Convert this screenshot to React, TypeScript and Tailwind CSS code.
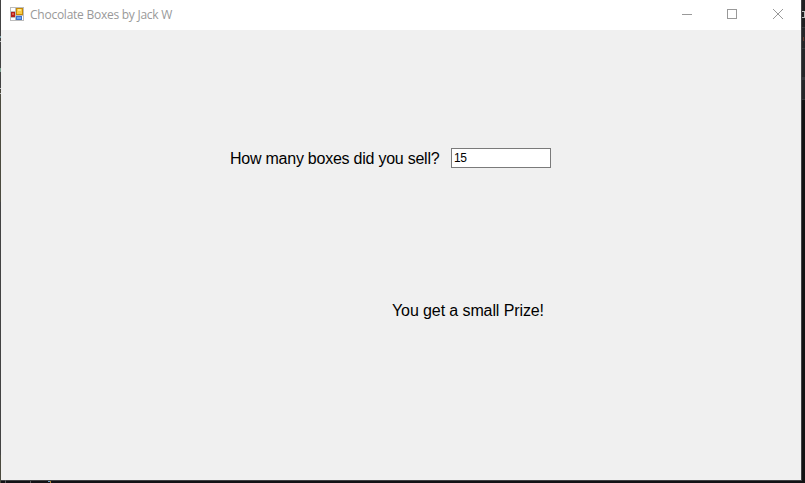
function FormIcon() {
  return (
    <svg width="14" height="14" viewBox="0 0 14 14" shapeRendering="crispEdges" className="shrink-0">
      <rect width="14" height="14" fill="#bcbcbc" />
      <rect x="1" y="1" width="4" height="3" fill="#fff" />
      <rect x="1" y="11" width="4" height="2" fill="#fff" />
      <rect x="12" y="9" width="1" height="4" fill="#fff" />
      <rect x="1" y="5" width="4" height="5" fill="#b3201c" />
      <rect x="2" y="6" width="2" height="2" fill="#e05a48" />
      <rect x="6" y="1" width="7" height="7" fill="#c58a08" />
      <rect x="7" y="2" width="5" height="5" fill="#f8cb45" />
      <rect x="8" y="2" width="3" height="2" fill="#ffe58c" />
      <rect x="6" y="9" width="6" height="4" fill="#3b72cf" />
      <rect x="7" y="10" width="4" height="2" fill="#70a5f0" />
    </svg>
  );
}

function TitleBar() {
  return (
    <header className="flex h-[30px] items-start justify-between bg-white">
      <div className="flex items-start pl-[9px] pt-[7px]">
        <FormIcon />
        <span className="ml-[6px] whitespace-nowrap font-['Open_Sans',sans-serif] text-[12px] leading-[16px] tracking-[-0.25px] text-[#999]">
          Chocolate Boxes by Jack W
        </span>
      </div>
      <div className="flex pr-[17px] pt-[9px]">
        <svg width="102" height="11" viewBox="0 0 102 11" fill="none" stroke="#999">
          <path d="M0 5.5h10M45.5 .5h9v9h-9z" shapeRendering="crispEdges" />
          <path d="M91 0l10 10M101 0L91 10" />
        </svg>
      </div>
    </header>
  );
}

function DesktopEdge() {
  return (
    <svg width="4" height="483" viewBox="0 0 4 483" shapeRendering="crispEdges" className="shrink-0">
      <rect width="4" height="483" fill="#131314" />
      <rect width="4" height="27" fill="#1f2022" />
      <rect y="27" width="4" height="73" fill="#252629" />
      <path d="M0 27.5h4M0 48.5h4M0 99.5h4" stroke="#38393c" />
      <rect y="77" width="4" height="3" fill="#36373b" />
      <path d="M0 11.5h2.5v6H0" fill="none" stroke="#bbb" />
      <rect x="1" y="37" width="1" height="4" fill="#693c31" />
    </svg>
  );
}

export default function App() {
  return (
    <div className="flex h-[483px] w-[805px] overflow-hidden bg-[#111113]">
      <svg width="1" height="483" viewBox="0 0 1 483" shapeRendering="crispEdges" className="shrink-0">
        <rect width="1" height="483" fill="#424242" />
        <rect y="90" width="1" height="112" fill="#4b4a3e" />
        <rect y="455" width="1" height="28" fill="#4b4a3e" />
        <rect y="36" width="1" height="2" fill="#799da4" />
        <rect y="41" width="1" height="1" fill="#bbb" />
        <rect y="68" width="1" height="4" fill="#799d8c" />
        <rect y="88" width="1" height="1" fill="#bbb" />
        <rect y="93" width="1" height="1" fill="#bbb" />
      </svg>
      <div className="flex w-[800px] shrink-0 flex-col">
        <TitleBar />
        <main className="h-[450px] bg-[#f0f0f0] font-['Liberation_Sans',Arial,sans-serif] text-[16px] leading-[20px] text-black">
          <div className="flex pl-[229px] pt-[118px]">
            <label htmlFor="boxes" className="w-[221px] whitespace-nowrap pt-px">
              <span className="tracking-[-0.24px]">How many boxes did you sell?</span>
            </label>
            <input
              id="boxes"
              defaultValue="15"
              className="h-[20px] w-[100px] border border-[#7a7a7a] bg-white pl-[2px] text-[12px] leading-[18px] tracking-[-0.3px] outline-none"
            />
          </div>
          <p className="ml-[391px] mt-[132px] whitespace-nowrap tracking-[-0.1px]">You get a small Prize!</p>
        </main>
        <svg width="800" height="3" viewBox="0 0 800 3" shapeRendering="crispEdges">
          <rect width="800" height="1" fill="#424244" />
          <rect y="1" width="800" height="2" fill="#121115" />
          <path d="M4.500 0v3M29.500 1v2" stroke="#5a5a5c" />
          <rect x="47" y="1" width="2" height="1" fill="#6b9cc0" />
          <rect x="49" y="1" width="1" height="2" fill="#b28635" />
        </svg>
      </div>
      <div className="h-[481px] w-px shrink-0 bg-[#404144]" />
      <DesktopEdge />
    </div>
  );
}
